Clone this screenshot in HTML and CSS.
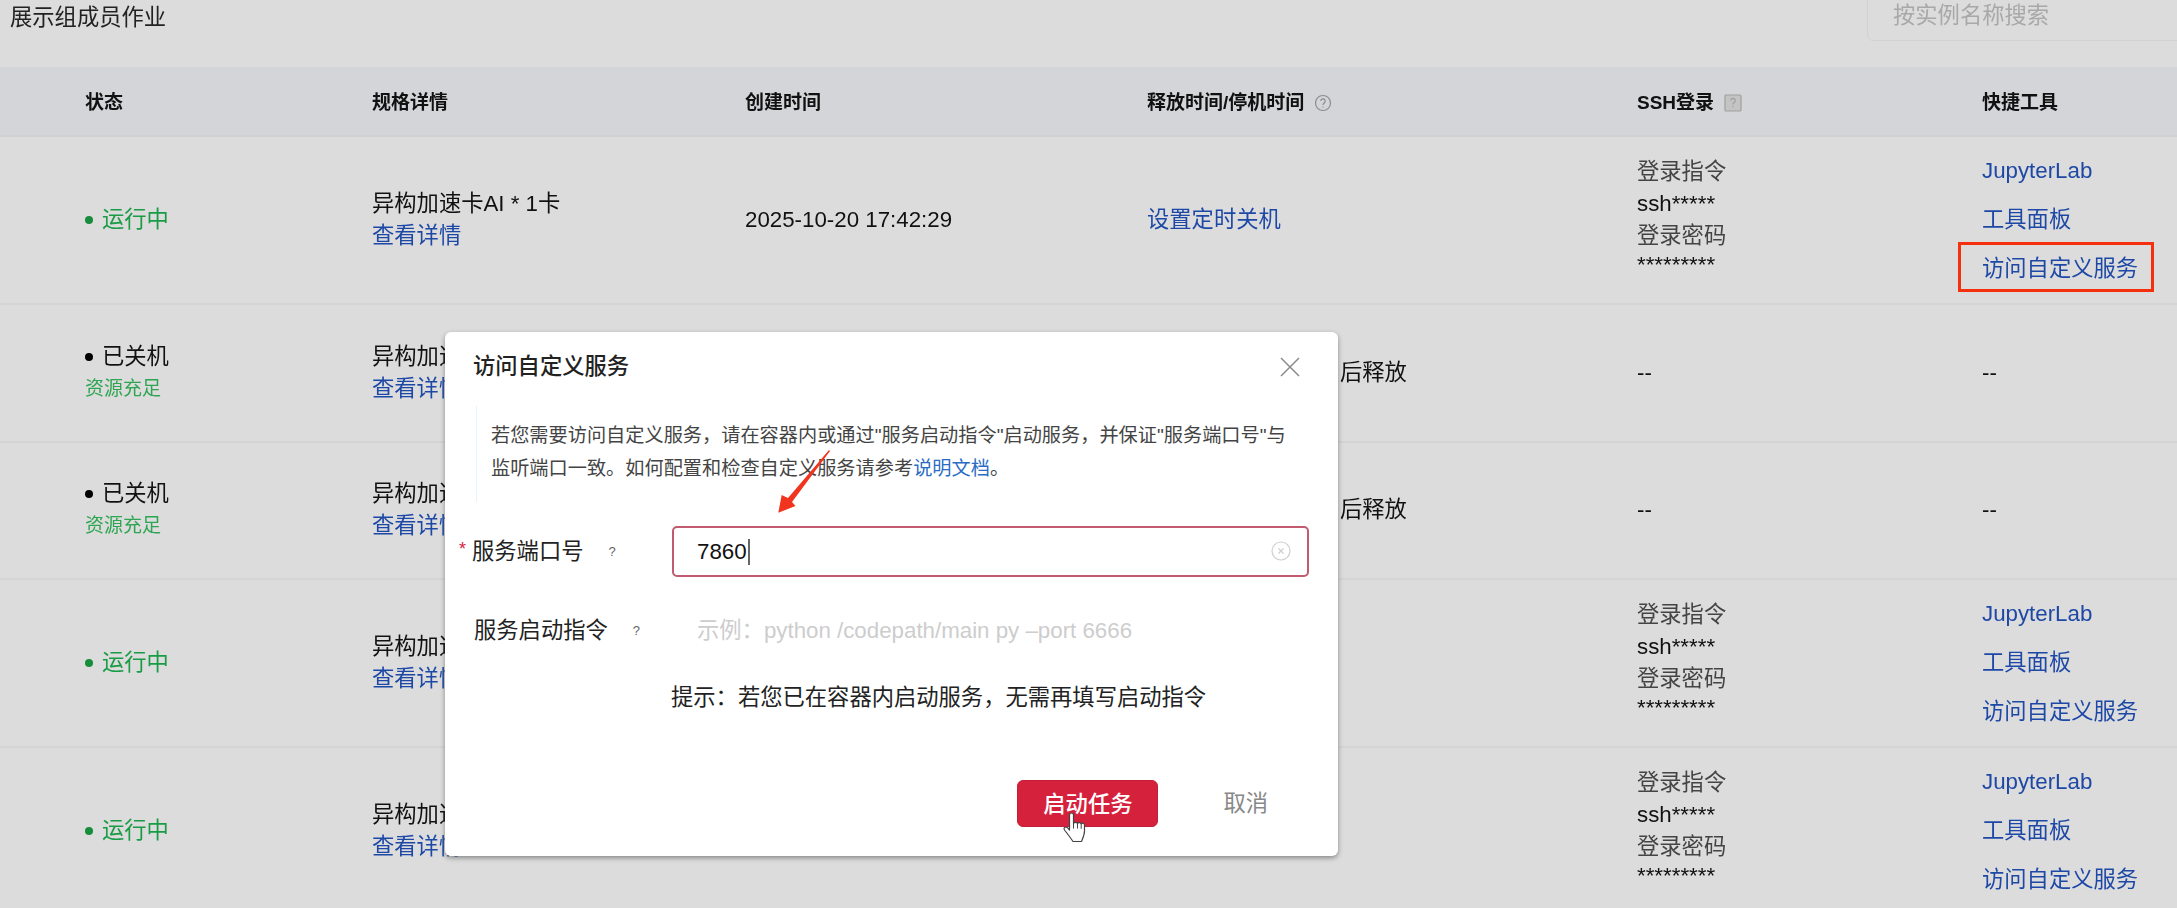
FILE: index.html
```html
<!DOCTYPE html>
<html lang="zh-CN">
<head>
<meta charset="utf-8">
<title>展示组成员作业</title>
<link rel="stylesheet" href="styles.css">
</head>
<body>
<main class="page">
  <div class="topbar">
    <div class="page-title">展示组成员作业</div>
    <div class="search">按实例名称搜索</div>
  </div>
  <div class="grid head">
    <div>状态</div>
    <div>规格详情</div>
    <div>创建时间</div>
    <div class="with-icon">释放时间/停机时间
      <svg class="help" viewBox="0 0 18 18"><circle cx="9" cy="9" r="7.5"/><path d="M6.8 7a2.2 2.2 0 1 1 3.4 1.900c-.8.5-1.200 1-1.200 2"/><path d="M9 12.600v1"/></svg>
    </div>
    <div class="with-icon">SSH登录
      <svg class="help-square" viewBox="0 0 18 18"><rect x="1" y="1" width="16" height="16" rx="1"/><path d="M6.8 6.500a2.200 2.200 0 1 1 3.400 1.900c-.8.5-1.200 1-1.200 2"/><path d="M9 12v1.200"/></svg>
    </div>
    <div>快捷工具</div>
  </div>

  <div class="grid row tall">
    <div><div class="status on"><i></i>运行中</div></div>
    <div><div>异构加速卡AI * 1卡</div><a class="link">查看详情</a></div>
    <div>2025-10-20 17:42:29</div>
    <div><a class="link">设置定时关机</a></div>
    <div class="ssh"><div class="muted">登录指令</div><div>ssh*****</div><div class="muted">登录密码</div><div class="stars">*********</div></div>
    <div class="tools"><a class="link">JupyterLab</a><a class="link">工具面板</a><a class="link">访问自定义服务</a></div>
  </div>

  <div class="grid row short">
    <div><div class="status"><i></i>已关机</div><div class="res">资源充足</div></div>
    <div><div>异构加速卡AI * 1卡</div><a class="link">查看详情</a></div>
    <div></div>
    <div class="after">后释放</div>
    <div>--</div>
    <div>--</div>
  </div>

  <div class="grid row short">
    <div><div class="status"><i></i>已关机</div><div class="res">资源充足</div></div>
    <div><div>异构加速卡AI * 1卡</div><a class="link">查看详情</a></div>
    <div></div>
    <div class="after">后释放</div>
    <div>--</div>
    <div>--</div>
  </div>

  <div class="grid row tall">
    <div><div class="status on"><i></i>运行中</div></div>
    <div><div>异构加速卡AI * 1卡</div><a class="link">查看详情</a></div>
    <div></div>
    <div></div>
    <div class="ssh"><div class="muted">登录指令</div><div>ssh*****</div><div class="muted">登录密码</div><div class="stars">*********</div></div>
    <div class="tools"><a class="link">JupyterLab</a><a class="link">工具面板</a><a class="link">访问自定义服务</a></div>
  </div>

  <div class="grid row tall last">
    <div><div class="status on"><i></i>运行中</div></div>
    <div><div>异构加速卡AI * 1卡</div><a class="link">查看详情</a></div>
    <div></div>
    <div></div>
    <div class="ssh"><div class="muted">登录指令</div><div>ssh*****</div><div class="muted">登录密码</div><div class="stars">*********</div></div>
    <div class="tools"><a class="link">JupyterLab</a><a class="link">工具面板</a><a class="link">访问自定义服务</a></div>
  </div>
</main>

<div class="highlight"></div>

<section class="modal">
  <header class="modal-head">
    <h2>访问自定义服务</h2>
    <svg class="close" viewBox="0 0 20 20"><path d="M1 1l18 18M19 1L1 19"/></svg>
  </header>
  <div class="notice">若您需要访问自定义服务，请在容器内或通过"服务启动指令"启动服务，并保证"服务端口号"与<br>监听端口一致。如何配置和检查自定义服务请参考<a class="doc">说明文档</a>。</div>
  <div class="field first">
    <label><span class="req">*</span>服务端口号<span class="q">?</span></label>
    <div class="input active">
      <span class="value">7860</span><span class="caret"></span>
      <svg class="clear" viewBox="0 0 20 20"><circle cx="10" cy="10" r="9"/><path d="M7.500 7.500l5 5M12.500 7.500l-5 5"/></svg>
    </div>
  </div>
  <div class="field second">
    <label>服务启动指令<span class="q">?</span></label>
    <div class="input"><span class="placeholder">示例：python /codepath/main py –port 6666</span></div>
  </div>
  <p class="hint">提示：若您已在容器内启动服务，无需再填写启动指令</p>
  <footer class="modal-foot">
    <button class="primary">启动任务</button>
    <span class="cancel">取消</span>
  </footer>
</section>

<svg class="arrow" viewBox="0 0 70 80"><polygon points="59,10 60,11 22,62 25.500,66 8.300,72.700 11.700,55 18,58"/></svg>

<svg class="hand" viewBox="0 0 26 31">
  <path class="hand-fill" d="M7.500 3a2 2 0 0 1 4 0v8.500c.5-1.500 3.500-1.500 4 0 .5-1.200 3.200-1.200 3.700.3.7-1 3-.7 3.300 1v6.200c0 4-2 8-3 10.500H11c-2-3-5-7-8.500-11.500-1.500-2 .8-4 3-2.300L7.500 18Z"/>
  <path class="hand-line" d="M11.500 11.500v5M15.500 11.500v5M19.200 11.800v5"/>
</svg>
</body>
</html>
```

FILE: styles.css
```css
* { box-sizing: border-box; }
html, body { margin: 0; height: 100%; overflow: hidden; }
body {
  position: relative;
  background: #dcdcdc;
  color: #111;
  font-family: "Liberation Sans", "Noto Sans CJK SC", sans-serif;
  font-size: 22.300px;
  line-height: 32px;
}
.page { width: 2177px; filter: blur(.35px); }

.topbar { height: 67px; display: flex; justify-content: space-between; align-items: flex-start; padding-left: 10px; }
.page-title { line-height: 35px; color: #222; }
.search {
  width: 330px; height: 50px; margin: -9px -20px 0 0; padding: 8px 25px;
  border: 1px solid #d2d2d2; border-radius: 6px;
  color: #a8a8a8; line-height: 32px;
}

.grid { display: grid; grid-template-columns: 287px 373px 402px 490px 345px 195px; padding-left: 85px; align-items: center; }
.head { height: 70px; background: #d4d5d9; border-bottom: 2px solid #d0d1d4; font-size: 19px; font-weight: 700; padding-top: 4px; }
.with-icon { display: flex; align-items: center; gap: 10px; }
.help, .help-square { width: 18px; height: 18px; fill: none; stroke: #8c8c8c; stroke-width: 1.200; font-weight: 400; }
.help-square { fill: #c4c4c4; stroke: #a0a0a0; }

.row { border-bottom: 2px solid #d4d4d4; }
.tall { height: 168px; }
.short { height: 137.500px; }
.last { border-bottom: 0; padding-bottom: 3px; }

.link { color: #1e48a6; display: block; }
.status { display: flex; align-items: center; gap: 9px; }
.status i { width: 8px; height: 8px; border-radius: 50%; background: #000; }
.status.on { color: #1a9b45; }
.status.on i { background: #168c3c; }
.res { color: #2ea552; font-size: 19px; }
.after { padding-left: 193px; }
.muted { color: #444; }
.stars { margin: -3px 0 3px; }
.tools { display: flex; flex-direction: column; gap: 17px; }

.highlight {
  position: absolute; left: 1958px; top: 242px; width: 196px; height: 50px;
  border: 3px solid #f5300f;
}

.modal {
  position: absolute; left: 445px; top: 332px; width: 893px; height: 524px;
  background: #fff; border-radius: 6px;
  box-shadow: 0 2px 5px rgba(0,0,0,.38);
  color: #222;
}
.modal-head { height: 70px; display: flex; justify-content: space-between; align-items: center; padding: 0 38px 0 28px; }
.modal-head h2 { margin: 0; font-size: 22.300px; font-weight: 500; color: #222; }
.close { width: 20px; height: 20px; fill: none; stroke: #8a8a8a; stroke-width: 1.500; }
.notice {
  height: 96px; margin: 4px 0 0 31px; padding: 13px 0 0 14px;
  border-left: 1px solid #eaf3fb;
  font-size: 19.200px; line-height: 33px; color: #444;
}
.doc { color: #2a6cc4; }
.field { display: flex; align-items: center; }
.field.first { margin-top: 24px; padding-left: 27px; }
.field.second { margin-top: 28px; padding-left: 29px; }
.field label { display: flex; align-items: center; width: 200px; position: relative; }
.field.second label { width: 198px; }
.req { position: absolute; left: -13px; top: -3px; color: #d9233f; font-size: 18px; }
.q { margin-left: 25px; font-size: 13px; color: #666; }
.input {
  position: relative; width: 637px; height: 51px; padding: 0 23px;
  display: flex; align-items: center;
  border: 2px solid transparent; border-radius: 5px;
}
.input.active { border-color: #c25a70; }
.value { color: #111; }
.caret { width: 2px; height: 26px; margin-left: 1px; background: #666; }
.clear { position: absolute; right: 16px; top: 13px; width: 20px; height: 20px; fill: none; stroke: #cfcfcf; stroke-width: 1.200; }
.placeholder { color: #cdcdcd; white-space: nowrap; }
.hint { margin: 26px 0 0 226px; color: #222; }
.modal-foot { margin-top: 66px; padding-right: 70px; display: flex; justify-content: flex-end; align-items: center; gap: 65px; }
.primary {
  width: 141px; height: 47px; padding: 0 0 4px;
  border: 1px solid #c41f38; border-radius: 6px;
  background: #d6213d; color: #fff;
  font: 500 22.300px "Liberation Sans", "Noto Sans CJK SC", sans-serif;
}
.cancel { color: #888; }

.arrow { position: absolute; left: 770px; top: 440px; width: 70px; height: 80px; }
.arrow polygon { fill: #f0341f; }
.hand { position: absolute; left: 1062px; top: 812px; width: 26px; height: 31px; }
.hand-fill { fill: #fff; stroke: #444; stroke-width: 1.200; stroke-linejoin: round; }
.hand-line { fill: none; stroke: #444; stroke-width: 1; }
```
